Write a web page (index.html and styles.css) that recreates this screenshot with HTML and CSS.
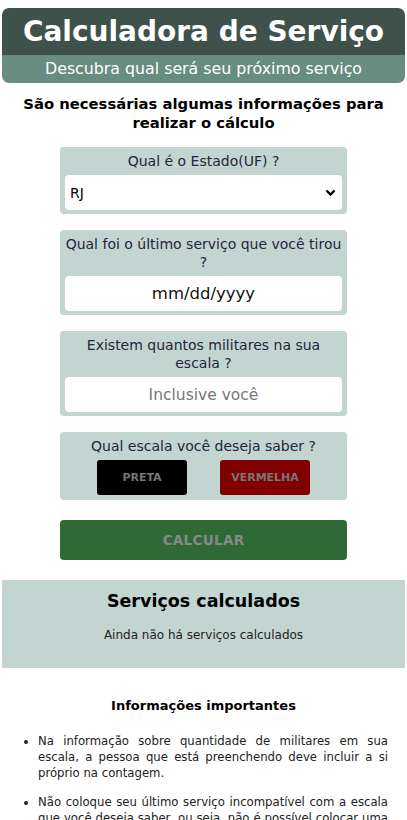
FILE: index.html
```html
<!DOCTYPE html>
<html lang="pt-BR">
<head>
<meta charset="utf-8">
<title>Calculadora de Serviço</title>
<link rel="stylesheet" href="styles.css">
</head>
<body>
<header class="header">
  <h1 class="header-title">Calculadora de Serviço</h1>
  <p class="header-sub">Descubra qual será seu próximo serviço</p>
</header>

<h2 class="intro">São necessárias algumas informações para realizar o cálculo</h2>

<form class="form">
  <div class="card">
    <label class="card-label">Qual é o Estado(UF) ?</label>
    <div class="select">
      <span>RJ</span>
      <svg class="chev" width="11" height="8" viewBox="0 0 11 8"><path d="M1.5 1.5 L5.5 5.5 L9.5 1.5" fill="none" stroke="#000" stroke-width="2.4"/></svg>
    </div>
  </div>
  <div class="card">
    <label class="card-label">Qual foi o último serviço que você tirou ?</label>
    <div class="field field-date">mm/dd/yyyy</div>
  </div>
  <div class="card">
    <label class="card-label">Existem quantos militares na sua escala ?</label>
    <div class="field field-ph">Inclusive você</div>
  </div>
  <div class="card">
    <label class="card-label">Qual escala você deseja saber ?</label>
    <div class="choices">
      <button type="button" class="choice choice-black">PRETA</button>
      <button type="button" class="choice choice-red">VERMELHA</button>
    </div>
  </div>
  <button type="button" class="calc">CALCULAR</button>
</form>

<section class="results">
  <h2 class="results-title">Serviços calculados</h2>
  <p class="results-empty">Ainda não há serviços calculados</p>
</section>

<section class="info">
  <h3 class="info-title">Informações importantes</h3>
  <ul class="info-list">
    <li>Na informação sobre quantidade de militares em sua escala, a pessoa que está preenchendo deve incluir a si próprio na contagem.</li>
    <li>Não coloque seu último serviço incompatível com a escala que você deseja saber, ou seja, não é possível colocar uma data referente à escala preta e escolher a escala vermelha, e vice-versa.</li>
  </ul>
</section>
</body>
</html>
```

FILE: styles.css
```css
* { box-sizing: border-box; }
html, body { margin: 0; padding: 0; background: #fff; }
body {
  font-family: "DejaVu Sans", "Noto Sans", sans-serif;
  color: #111;
  padding: 8px 2px 0;
}
.header {
  border-radius: 7px;
  overflow: hidden;
  text-align: center;
}
.header-title {
  margin: 0;
  height: 47px;
  background: #3e524b;
  color: #fff;
  font-size: 28px;
  font-weight: 700;
  line-height: 47px;
}
.header-sub {
  margin: 0;
  height: 28px;
  background: #688c7f;
  color: #fff;
  font-size: 15.8px;
  line-height: 27px;
}
.intro {
  margin: 11px auto 0;
  width: 370px;
  text-align: center;
  font-size: 14.8px;
  font-weight: 700;
  line-height: 19px;
  color: #000;
}
.form {
  width: 287px;
  margin: 15px auto 0;
  display: flex;
  flex-direction: column;
  gap: 16px;
}
.card {
  background: #c2d5d1;
  border-radius: 4px;
  padding: 5px 5px 4px;
  display: flex;
  flex-direction: column;
  gap: 5px;
  text-align: center;
}
.card-label {
  font-size: 14px;
  line-height: 18px;
  color: #25253a;
}
.select {
  height: 35px;
  background: #fff;
  border-radius: 4px;
  display: flex;
  align-items: center;
  justify-content: space-between;
  padding: 0 6px 0 5px;
  font-size: 14px;
  color: #000;
}
.chev { margin-top: 1px; }
.field {
  height: 35px;
  background: #fff;
  border-radius: 4px;
  display: flex;
  align-items: center;
  justify-content: center;
}
.field-date { color: #111; font-size: 16.5px; }
.field-ph { color: #777; font-size: 15.5px; }
.choices {
  display: flex;
  justify-content: center;
  gap: 33px;
  padding-bottom: 1px;
}
.choice {
  width: 90px;
  height: 35px;
  border: 0;
  border-radius: 3px;
  font-family: inherit;
  font-size: 11px;
  font-weight: 700;
  color: #777;
}
.choice-black { background: #000; }
.choice-red { background: #800000; }
.calc {
  margin-top: 4px;
  height: 40px;
  border: 0;
  border-radius: 4px;
  background: #2d6a35;
  color: #888;
  font-family: inherit;
  font-size: 13.5px;
  font-weight: 700;
  letter-spacing: 0.3px;
}
.results {
  margin-top: 20px;
  height: 88px;
  background: #c2d5d1;
  text-align: center;
  padding-top: 9px;
}
.results-title {
  margin: 0;
  font-size: 17.5px;
  font-weight: 700;
  line-height: 24px;
  color: #000;
}
.results-empty {
  margin: 15px 0 0;
  font-size: 12px;
  color: #222;
}
.info {
  padding: 30px 0 0;
}
.info-title {
  margin: 0;
  text-align: center;
  font-size: 13px;
  font-weight: 700;
  color: #000;
}
.info-list {
  margin: 20px 0 0;
  padding: 0 17px 0 36px;
  font-size: 11.7px;
  line-height: 16px;
  color: #222;
  text-align: justify;
}
.info-list li { margin-bottom: 13px; }
```
